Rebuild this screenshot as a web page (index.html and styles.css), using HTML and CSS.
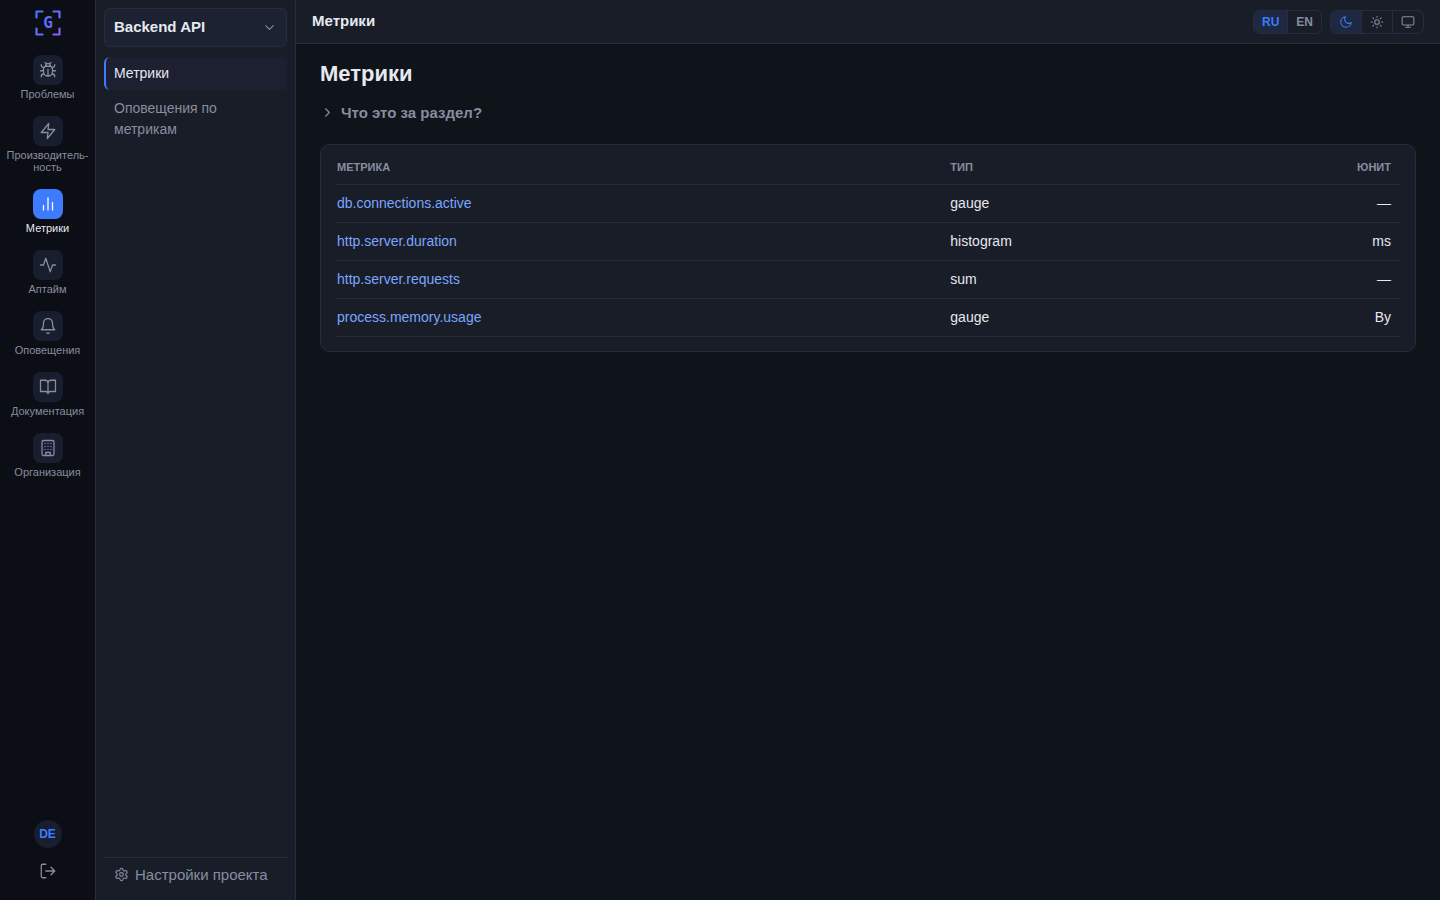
FILE: index.html
```html
<!DOCTYPE html>
<html lang="ru">
<head>
<meta charset="utf-8">
<meta name="viewport" content="width=device-width, initial-scale=1">
<title>Метрики</title>
<link rel="stylesheet" href="styles.css">
</head>
<body>
<div class="app">
  <aside class="rail">
    <a class="logo" href="#" aria-label="Главная">
      <svg width="28" height="28" viewBox="0 0 28 28" fill="none">
        <defs>
          <linearGradient id="brand" gradientUnits="userSpaceOnUse" x1="2" y1="2" x2="26" y2="26">
            <stop offset="0" stop-color="#3d7bff"/>
            <stop offset="1" stop-color="#8b5cf6"/>
          </linearGradient>
        </defs>
        <path d="M2.500 8.500V2.500H8.500M19.500 2.500h6V8.500M25.500 19.500v6H19.500M8.500 25.500H2.500V19.500" stroke="url(#brand)" stroke-width="2.200" stroke-linecap="round" stroke-linejoin="round"/>
        <text class="logo-letter" x="14" y="19" text-anchor="middle" fill="url(#brand)">G</text>
      </svg>
    </a>
    <nav class="rail-nav">
      <a class="rail-item" href="#">
        <span class="rail-icon"><svg class="icon" viewBox="0 0 24 24"><path d="m8 2 1.880 1.880M14.120 3.880 16 2M9 7.130v-1a3 3 0 1 1 6 0v1M12 20c-3.300 0-6-2.700-6-6v-3a4 4 0 0 1 4-4h4a4 4 0 0 1 4 4v3c0 3.300-2.700 6-6 6M12 20v-9M6.530 9C4.600 8.800 3 7.100 3 5M6 13H2M3 21c0-2.100 1.700-3.900 3.800-4M20.970 5c0 2.100-1.600 3.800-3.500 4M22 13h-4M17.200 17c2.100.1 3.800 1.900 3.800 4"/></svg></span>
        <span>Проблемы</span>
      </a>
      <a class="rail-item" href="#">
        <span class="rail-icon"><svg class="icon" viewBox="0 0 24 24"><path d="M13 2 3 14h9l-1 8 10-12h-9z"/></svg></span>
        <span>Производитель-<br>ность</span>
      </a>
      <a class="rail-item active" href="#" aria-current="page">
        <span class="rail-icon"><svg class="icon" viewBox="0 0 24 24"><path d="M18 20V10M12 20V4M6 20v-6"/></svg></span>
        <span>Метрики</span>
      </a>
      <a class="rail-item" href="#">
        <span class="rail-icon"><svg class="icon" viewBox="0 0 24 24"><path d="M22 12h-4l-3 9L9 3l-3 9H2"/></svg></span>
        <span>Аптайм</span>
      </a>
      <a class="rail-item" href="#">
        <span class="rail-icon"><svg class="icon" viewBox="0 0 24 24"><path d="M18 8A6 6 0 0 0 6 8c0 7-3 9-3 9h18s-3-2-3-9M13.730 21a2 2 0 0 1-3.460 0"/></svg></span>
        <span>Оповещения</span>
      </a>
      <a class="rail-item" href="#">
        <span class="rail-icon"><svg class="icon" viewBox="0 0 24 24"><path d="M2 3h6a4 4 0 0 1 4 4v14a3 3 0 0 0-3-3H2zM22 3h-6a4 4 0 0 0-4 4v14a3 3 0 0 1 3-3h7z"/></svg></span>
        <span>Документация</span>
      </a>
      <a class="rail-item" href="#">
        <span class="rail-icon"><svg class="icon" viewBox="0 0 24 24"><rect x="4" y="2" width="16" height="20" rx="2"/><path d="M9 22v-4h6v4M8 6h.01M16 6h.01M12 6h.01M12 10h.01M12 14h.01M16 10h.01M16 14h.01M8 10h.01M8 14h.01"/></svg></span>
        <span>Организация</span>
      </a>
    </nav>
    <div class="rail-footer">
      <button class="avatar" type="button" aria-label="Профиль">DE</button>
      <button class="logout" type="button" aria-label="Выйти"><svg class="icon" viewBox="0 0 24 24"><path d="M9 21H5a2 2 0 0 1-2-2V5a2 2 0 0 1 2-2h4M16 17l5-5-5-5M21 12H9"/></svg></button>
    </div>
  </aside>

  <aside class="sidebar">
    <button class="project" type="button">
      <span>Backend API</span>
      <svg class="icon chevron" viewBox="0 0 24 24"><path d="m6 9 6 6 6-6"/></svg>
    </button>
    <nav class="side-nav">
      <a class="side-link active" href="#" aria-current="page">Метрики</a>
      <a class="side-link" href="#">Оповещения по метрикам</a>
    </nav>
    <div class="side-footer">
      <a class="settings" href="#">
        <svg class="icon cog" viewBox="0 0 24 24"><path d="M12.220 2h-.44a2 2 0 0 0-2 2v.18a2 2 0 0 1-1 1.730l-.43.25a2 2 0 0 1-2 0l-.15-.08a2 2 0 0 0-2.730.73l-.22.38a2 2 0 0 0 .73 2.730l.15.1a2 2 0 0 1 1 1.720v.51a2 2 0 0 1-1 1.740l-.15.09a2 2 0 0 0-.73 2.730l.22.38a2 2 0 0 0 2.730.73l.15-.08a2 2 0 0 1 2 0l.43.25a2 2 0 0 1 1 1.730V20a2 2 0 0 0 2 2h.44a2 2 0 0 0 2-2v-.18a2 2 0 0 1 1-1.730l.43-.25a2 2 0 0 1 2 0l.15.08a2 2 0 0 0 2.730-.73l.22-.39a2 2 0 0 0-.73-2.730l-.15-.08a2 2 0 0 1-1-1.740v-.5a2 2 0 0 1 1-1.740l.15-.09a2 2 0 0 0 .73-2.730l-.22-.38a2 2 0 0 0-2.730-.73l-.15.08a2 2 0 0 1-2 0l-.43-.25a2 2 0 0 1-1-1.730V4a2 2 0 0 0-2-2z"/><circle cx="12" cy="12" r="3"/></svg>
        <span>Настройки проекта</span>
      </a>
    </div>
  </aside>

  <div class="content">
    <header class="topbar">
      <div class="topbar-title">Метрики</div>
      <div class="controls">
        <div class="segment" role="group" aria-label="Язык">
          <button class="lang on" type="button" aria-pressed="true">RU</button>
          <button class="lang" type="button" aria-pressed="false">EN</button>
        </div>
        <div class="segment" role="group" aria-label="Тема">
          <button class="theme on" type="button" aria-label="Тёмная" aria-pressed="true"><svg class="icon small" viewBox="0 0 24 24"><path d="M21 12.790A9 9 0 1 1 11.210 3 7 7 0 0 0 21 12.790z"/></svg></button>
          <button class="theme" type="button" aria-label="Светлая" aria-pressed="false"><svg class="icon small" viewBox="0 0 24 24"><circle cx="12" cy="12" r="4"/><path d="M12 2v2M12 20v2M4.930 4.930l1.410 1.410M17.660 17.660l1.410 1.410M2 12h2M20 12h2M6.340 17.660l-1.410 1.410M19.070 4.930l-1.410 1.410"/></svg></button>
          <button class="theme" type="button" aria-label="Системная" aria-pressed="false"><svg class="icon small" viewBox="0 0 24 24"><rect x="2" y="3" width="20" height="14" rx="2"/><path d="M8 21h8M12 17v4"/></svg></button>
        </div>
      </div>
    </header>
    <main class="main">
      <h1 class="title">Метрики</h1>
      <details class="about">
        <summary><svg class="icon chevron" viewBox="0 0 24 24"><path d="m9 18 6-6-6-6"/></svg><span>Что это за раздел?</span></summary>
      </details>
      <section class="card">
        <table class="metrics">
          <thead>
            <tr><th class="name" scope="col">Метрика</th><th class="type" scope="col">Тип</th><th class="unit" scope="col">Юнит</th></tr>
          </thead>
          <tbody>
            <tr><td class="name"><a href="#">db.connections.active</a></td><td>gauge</td><td class="unit">—</td></tr>
            <tr><td class="name"><a href="#">http.server.duration</a></td><td>histogram</td><td class="unit">ms</td></tr>
            <tr><td class="name"><a href="#">http.server.requests</a></td><td>sum</td><td class="unit">—</td></tr>
            <tr><td class="name"><a href="#">process.memory.usage</a></td><td>gauge</td><td class="unit">By</td></tr>
          </tbody>
        </table>
      </section>
    </main>
  </div>
</div>
</body>
</html>
```
FILE: styles.css
```css
:root {
  --bg: #0f131a;
  --rail: #0c0e15;
  --panel: #191d28;
  --raised: #1c2231;
  --tile: #181d30;
  --line: #262d3e;
  --text: #e6e9ef;
  --muted: #878d9f;
  --accent: #3d7bff;
  --link: #79a6ff;
}

* { box-sizing: border-box; }

body {
  margin: 0;
  background: var(--bg);
  color: var(--text);
  font: 14px/21px "Liberation Sans", Arial, sans-serif;
}

a { color: inherit; text-decoration: none; }

button {
  margin: 0;
  padding: 0;
  border: 0;
  background: none;
  color: inherit;
  font: inherit;
  cursor: pointer;
}

.icon {
  display: block;
  flex: none;
  width: 18px;
  height: 18px;
  fill: none;
  stroke: currentColor;
  stroke-width: 1.7;
  stroke-linecap: round;
  stroke-linejoin: round;
}
.icon.small { width: 14px; height: 14px; stroke-width: 1.8; }
.icon.chevron { width: 15px; height: 15px; stroke-width: 1.8; }
.icon.cog { width: 15px; height: 15px; stroke-width: 1.8; }

.app { display: flex; min-height: 100vh; }

.rail {
  display: flex;
  flex-direction: column;
  align-items: center;
  flex: none;
  width: 96px;
  padding: 9px 0 20px;
  background: var(--rail);
  border-right: 1px solid var(--line);
}
.logo svg { display: block; }
.logo-letter { font: bold 16px "DejaVu Sans Mono", monospace; }

.rail-nav {
  display: flex;
  flex-direction: column;
  gap: 16px;
  margin-top: 18px;
}
.rail-item {
  display: flex;
  flex-direction: column;
  align-items: center;
  gap: 3px;
  color: var(--muted);
  font-size: 11px;
  line-height: 12px;
  text-align: center;
}
.rail-item.active { color: var(--text); }
.rail-icon {
  display: grid;
  place-items: center;
  width: 30px;
  height: 30px;
  border-radius: 8px;
  background: var(--tile);
}
.active .rail-icon { background: var(--accent); color: #fff; }

.rail-footer {
  display: flex;
  flex-direction: column;
  align-items: center;
  gap: 14px;
  margin-top: auto;
  color: var(--muted);
}
.avatar {
  width: 28px;
  height: 28px;
  border-radius: 50%;
  background: var(--tile);
  color: var(--accent);
  font-size: 12px;
  font-weight: bold;
}

.sidebar {
  display: flex;
  flex-direction: column;
  flex: none;
  width: 200px;
  padding: 8px;
  background: var(--panel);
  border-right: 1px solid var(--line);
}
.project {
  display: flex;
  align-items: center;
  justify-content: space-between;
  padding: 8px 9px 9px;
  border: 1px solid var(--line);
  border-radius: 6px;
  background: var(--raised);
  font-size: 15px;
  line-height: 20px;
  font-weight: bold;
}
.project .icon { color: var(--muted); }
.side-nav {
  display: flex;
  flex-direction: column;
  gap: 2px;
  margin-top: 10px;
}
.side-link {
  padding: 6px 8px;
  border-left: 2px solid transparent;
  border-radius: 6px;
  color: var(--muted);
}
.side-link.active {
  border-color: var(--accent);
  background: #1c2030;
  color: var(--text);
}
.side-footer {
  margin-top: auto;
  border-top: 1px solid var(--line);
}
.settings {
  display: flex;
  align-items: center;
  gap: 6px;
  padding: 6px 10px 7px;
  color: var(--muted);
  font-size: 15px;
}

.content { flex: 1; min-width: 0; }
.topbar {
  display: flex;
  align-items: flex-start;
  justify-content: space-between;
  padding: 10px 16px 9px;
  background: var(--panel);
  border-bottom: 1px solid var(--line);
}
.topbar-title { font-size: 15px; line-height: 21px; font-weight: bold; }
.controls { display: flex; gap: 8px; }
.segment {
  display: flex;
  height: 24px;
  overflow: hidden;
  border: 1px solid var(--line);
  border-radius: 6px;
  color: var(--muted);
}
.segment button + button { border-left: 1px solid var(--line); }
.segment .on { background: #1e2840; color: var(--accent); }
.lang { padding: 0 8px; font-size: 12px; line-height: 22px; font-weight: bold; }
.theme { padding: 0 8px; }

.main { padding: 16px 24px; }
.title { margin: 0; font-size: 22px; line-height: 28px; }
.about { margin-top: 14px; color: var(--muted); font-size: 15px; font-weight: bold; }
.about summary {
  display: flex;
  align-items: center;
  gap: 6px;
  list-style: none;
  cursor: pointer;
}
.card {
  margin-top: 21px;
  padding: 6px 16px 14px;
  border: 1px solid var(--line);
  border-radius: 10px;
  background: var(--panel);
}
.metrics { width: 100%; border-collapse: collapse; }
.metrics th, .metrics td {
  padding: 8px;
  border-bottom: 1px solid var(--line);
  text-align: left;
}
.metrics th {
  height: 33px;
  color: var(--muted);
  font-size: 11px;
  line-height: 15px;
  text-transform: uppercase;
}
.metrics .name { width: 57%; padding-left: 0; }
.metrics .type { width: 24%; }
.metrics .unit { text-align: right; }
.metrics a { color: var(--link); }
```
